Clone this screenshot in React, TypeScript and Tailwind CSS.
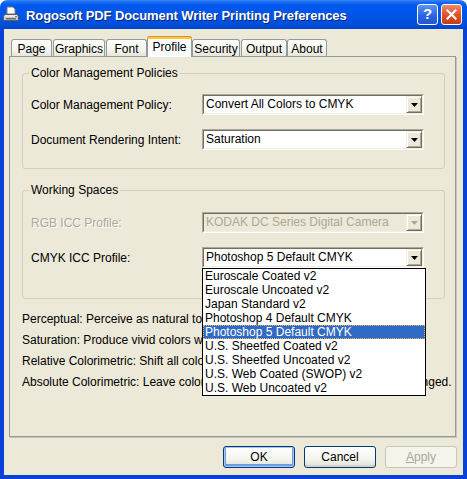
import React from 'react';

const tabs = [
  { label: 'Page', cls: 'w-[41px]' },
  { label: 'Graphics', cls: 'ml-[1px] w-[52px]' },
  { label: 'Font', cls: 'ml-[1px] w-[41px]' },
  { label: 'Profile', cls: 'w-[45px]', active: true },
  { label: 'Security', cls: 'w-[48px]' },
  { label: 'Output', cls: 'ml-[1px] w-[46px]' },
  { label: 'About', cls: 'w-[40px]' },
];

const profiles = [
  'Euroscale Coated v2',
  'Euroscale Uncoated v2',
  'Japan Standard v2',
  'Photoshop 4 Default CMYK',
  'Photoshop 5 Default CMYK',
  'U.S. Sheetfed Coated v2',
  'U.S. Sheetfed Uncoated v2',
  'U.S. Web Coated (SWOP) v2',
  'U.S. Web Uncoated v2',
];

const notes = [
  'Perceptual: Perceive as natural to the human eye.',
  'Saturation: Produce vivid colors with less accuracy.',
  'Relative Colorimetric: Shift all colors to white point.',
  'Absolute Colorimetric: Leave colors that are in the destination gamut unchanged.',
];

function PrinterIcon() {
  return (
    <svg width="16" height="17" viewBox="0 0 16 17">
      <path d="M4 1h6l2 2v5H4z" fill="#fff" stroke="#7a7a7a" />
      <path d="M1.5 8.5h13l1 2v4h-15v-4z" fill="#c8c8c8" stroke="#5c5c5c" />
      <rect x="2" y="9" width="12" height="2" fill="#e8e8e8" />
      <rect x="3" y="12" width="10" height="1.5" fill="#6e6e6e" />
      <rect x="12" y="10" width="2" height="1" fill="#3fae3f" />
    </svg>
  );
}

function Arrow({ disabled }: { disabled?: boolean }) {
  return (
    <svg width="7" height="4" viewBox="0 0 7 4">
      <path d="M0 0h7L3.5 4z" fill={disabled ? '#aca899' : '#000'} />
    </svg>
  );
}

function Combo({ value, disabled }: { value: string; disabled?: boolean }) {
  return (
    <div className="h-[21px] w-[222px] border border-t-[#aca899] border-l-[#aca899] border-r-white border-b-white">
      <div
        className={`flex h-full items-center border border-t-[#716f64] border-l-[#716f64] border-r-[#f1efe2] border-b-[#f1efe2] ${
          disabled ? 'bg-[#ece9d8] text-[#aca899]' : 'bg-white text-black'
        }`}
      >
        <span className="flex-1 truncate pl-[2px] leading-[15px]">{value}</span>
        <div className="flex h-[17px] w-[16px] items-center justify-center border border-t-[#f1efe2] border-l-[#f1efe2] border-r-[#716f64] border-b-[#716f64] bg-[#ece9d8] shadow-[inset_1px_1px_0_#fff,inset_-1px_-1px_0_#aca899]">
          <Arrow disabled={disabled} />
        </div>
      </div>
    </div>
  );
}

function Row({ label, children, disabled }: { label: string; children: React.ReactNode; disabled?: boolean }) {
  return (
    <div className="flex h-[21px] items-center">
      <span className={`w-[171px] ${disabled ? 'text-[#aca899] [text-shadow:1px_1px_0_#fff]' : 'text-black'}`}>{label}</span>
      {children}
    </div>
  );
}

function Group({ title, children, className }: { title: string; children: React.ReactNode; className?: string }) {
  return (
    <fieldset className={`rounded-[3px] border border-[#d0d0bf] ${className ?? ''}`}>
      <legend className="ml-[6px] px-[2px] leading-[14px] text-black">{title}</legend>
      {children}
    </fieldset>
  );
}

function XpButton({ label, focused, disabled }: { label: React.ReactNode; focused?: boolean; disabled?: boolean }) {
  const base = 'flex h-[22px] w-[72px] items-center justify-center rounded-[3px] border';
  if (disabled)
    return <div className={`${base} border-[#c9c7ba] bg-[#f5f4ea] text-[#aca899]`}>{label}</div>;
  return (
    <div
      className={`${base} border-[#003c74] bg-[linear-gradient(to_bottom,#ffffff_0%,#f4f4f0_60%,#e3e0d4_100%)] text-black ${
        focused ? 'shadow-[inset_0_0_0_1px_#a9c6f5,inset_0_-1px_0_2px_#6f9be2]' : 'shadow-[inset_0_-2px_0_#d6d0c5]'
      }`}
    >
      {label}
    </div>
  );
}

export default function App() {
  return (
    <div className="flex h-[479px] w-[467px] flex-col bg-white font-['Liberation_Sans',Arial,sans-serif] text-[12px] text-black">
      <div className="flex h-[29px] items-center rounded-t-[7px] bg-[linear-gradient(to_bottom,#3b8cf7_0%,#1f6ef5_6%,#0058ee_18%,#0055e6_60%,#004ed9_85%,#0044cc_100%)] pl-[3px] pr-[5px]">
        <PrinterIcon />
        <span className="ml-[7px] flex-1 pt-[2px] text-[13px] font-bold tracking-[-0.1px] text-white [text-shadow:1px_1px_0_#0a246a]">
          Rogosoft PDF Document Writer Printing Preferences
        </span>
        <div className="flex h-[21px] w-[21px] items-center justify-center rounded-[3px] border border-white bg-[linear-gradient(to_bottom,#5a96f8,#2a62e0_60%,#2558d2)] text-[15px] font-bold text-white">
          ?
        </div>
        <div className="ml-[3px] flex h-[21px] w-[21px] items-center justify-center rounded-[3px] border border-white bg-[linear-gradient(to_bottom,#ec8a6b,#e04e23_55%,#c73e16)]">
          <svg width="11" height="11" viewBox="0 0 11 11">
            <path d="M1.5 1.5l8 8M9.5 1.5l-8 8" stroke="#fff" strokeWidth="2.2" strokeLinecap="square" />
          </svg>
        </div>
      </div>

      <div className="flex flex-1 flex-col border-x-4 border-b-4 border-[#0842d6] bg-[#ece9d8] pl-[5px] pr-[6px] pt-[7px]">
        <div className="flex h-[20px] items-end pl-[2px]">
          {tabs.map((t) =>
            t.active ? (
              <div
                key={t.label}
                className={`relative z-10 -mb-px flex h-[21px] flex-col rounded-t-[3px] border-x border-[#919b9c] bg-[#fcfcfe] ${t.cls}`}
              >
                <div className="-mx-px h-[3px] rounded-t-[3px] border-t border-[#e68b2c] bg-[#ffc73c]" />
                <span className="flex-1 pt-[1px] text-center leading-[14px]">{t.label}</span>
              </div>
            ) : (
              <div
                key={t.label}
                className={`flex h-[17px] items-center justify-center rounded-t-[3px] border border-b-0 border-[#919b9c] bg-[linear-gradient(to_bottom,#ffffff,#f3f2ea_70%,#e8e6da)] pt-[2px] ${t.cls}`}
              >
                {t.label}
              </div>
            )
          )}
        </div>

        <div className="h-[381px] w-[447px] border border-[#919b9c] bg-[#ece9d8] pl-[12px] pr-[10px] pt-[9px] shadow-[1px_1px_0_#c8c5b5]">
          <Group title="Color Management Policies">
            <div className="flex flex-col gap-[14px] pb-[18px] pl-[8px] pt-[14px]">
              <Row label="Color Management Policy:">
                <Combo value="Convert All Colors to CMYK" />
              </Row>
              <Row label="Document Rendering Intent:">
                <Combo value="Saturation" />
              </Row>
            </div>
          </Group>

          <Group title="Working Spaces" className="mt-[14px]">
            <div className="flex flex-col gap-[14px] pb-[30px] pl-[8px] pt-[15px]">
              <Row label="RGB ICC Profile:" disabled>
                <Combo value="KODAK DC Series Digital Camera" disabled />
              </Row>
              <Row label="CMYK ICC Profile:">
                <div className="relative">
                  <Combo value="Photoshop 5 Default CMYK" />
                  <ul className="absolute left-0 top-full z-20 w-[224px] border border-black bg-white">
                    {profiles.map((p) => (
                      <li
                        key={p}
                        className={`h-[14px] whitespace-nowrap pl-[2px] leading-[14px] ${
                          p === 'Photoshop 5 Default CMYK'
                            ? 'bg-[#316ac5] text-white outline-1 outline-offset-[-1px] outline-dotted outline-[#e8b85a]'
                            : 'text-black'
                        }`}
                      >
                        {p}
                      </li>
                    ))}
                  </ul>
                </div>
              </Row>
            </div>
          </Group>

          <div className="mt-[10px] flex flex-col">
            {notes.map((n) => (
              <p key={n} className="whitespace-nowrap leading-[21px]">
                {n}
              </p>
            ))}
          </div>
        </div>

        <div className="mt-[9px] flex justify-end gap-[9px]">
          <XpButton label="OK" focused />
          <XpButton label="Cancel" />
          <XpButton
            label={
              <span>
                <span className="underline">A</span>pply
              </span>
            }
            disabled
          />
        </div>
      </div>
    </div>
  );
}
